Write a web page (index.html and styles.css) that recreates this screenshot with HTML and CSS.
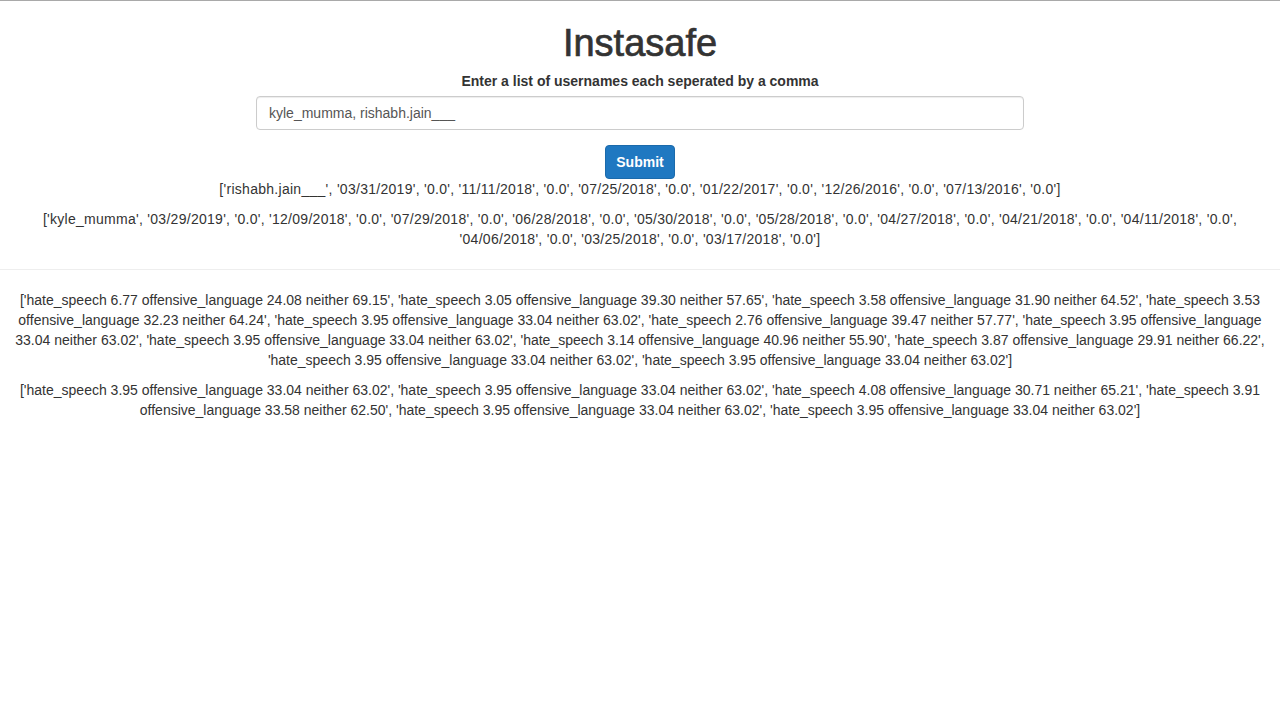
FILE: index.html
```html
<!DOCTYPE html>
<html>
<head>
<meta charset="utf-8">
<title>Instasafe</title>
<link rel="stylesheet" href="styles.css">
</head>
<body>
<div class="page">
  <h1 class="title">Instasafe</h1>
  <form class="form">
    <label class="label" for="users">Enter a list of usernames each seperated by a comma</label>
    <input class="input" id="users" type="text" value="kyle_mumma, rishabh.jain___">
    <button class="btn" type="button">Submit</button>
  </form>
  <p class="row row-dates">['rishabh.jain___', '03/31/2019', '0.0', '11/11/2018', '0.0', '07/25/2018', '0.0', '01/22/2017', '0.0', '12/26/2016', '0.0', '07/13/2016', '0.0']</p>
  <p class="row row-dates">['kyle_mumma', '03/29/2019', '0.0', '12/09/2018', '0.0', '07/29/2018', '0.0', '06/28/2018', '0.0', '05/30/2018', '0.0', '05/28/2018', '0.0', '04/27/2018', '0.0', '04/21/2018', '0.0', '04/11/2018', '0.0', '04/06/2018', '0.0', '03/25/2018', '0.0', '03/17/2018', '0.0']</p>
  <hr class="divider">
  <p class="row">['hate_speech 6.77 offensive_language 24.08 neither 69.15', 'hate_speech 3.05 offensive_language 39.30 neither 57.65', 'hate_speech 3.58 offensive_language 31.90 neither 64.52', 'hate_speech 3.53 offensive_language 32.23 neither 64.24', 'hate_speech 3.95 offensive_language 33.04 neither 63.02', 'hate_speech 2.76 offensive_language 39.47 neither 57.77', 'hate_speech 3.95 offensive_language 33.04 neither 63.02', 'hate_speech 3.95 offensive_language 33.04 neither 63.02', 'hate_speech 3.14 offensive_language 40.96 neither 55.90', 'hate_speech 3.87 offensive_language 29.91 neither 66.22', 'hate_speech 3.95 offensive_language 33.04 neither 63.02', 'hate_speech 3.95 offensive_language 33.04 neither 63.02']</p>
  <p class="row">['hate_speech 3.95 offensive_language 33.04 neither 63.02', 'hate_speech 3.95 offensive_language 33.04 neither 63.02', 'hate_speech 4.08 offensive_language 30.71 neither 65.21', 'hate_speech 3.91 offensive_language 33.58 neither 62.50', 'hate_speech 3.95 offensive_language 33.04 neither 63.02', 'hate_speech 3.95 offensive_language 33.04 neither 63.02']</p>
</div>
</body>
</html>
```
FILE: styles.css
```css
html, body {
  margin: 0;
  padding: 0;
  background: #fff;
}
body {
  border-top: 1px solid #a9a9a9;
  font-family: "Liberation Sans", Arial, Helvetica, sans-serif;
  font-size: 14px;
  line-height: 20px;
  color: #333;
}
.page {
  padding: 0 15px;
  text-align: center;
}
.title {
  font-size: 38px;
  font-weight: 500;
  line-height: 40px;
  margin: 22px 0 8px;
  color: #333;
  -webkit-text-stroke: 0.7px #333;
}
.form {
  display: flex;
  flex-direction: column;
  align-items: center;
}
.label {
  font-weight: bold;
  margin-bottom: 5px;
}
.input {
  box-sizing: border-box;
  width: 768px;
  height: 34px;
  padding: 6px 12px;
  font-family: inherit;
  font-size: 14px;
  color: #555;
  background: #fff;
  border: 1px solid #ccc;
  border-radius: 4px;
  box-shadow: inset 0 1px 1px rgba(0,0,0,.075);
  outline: none;
}
.btn {
  box-sizing: border-box;
  margin-top: 15px;
  width: 70px;
  height: 34px;
  padding: 6px 10px;
  font-family: inherit;
  font-size: 14px;
  font-weight: bold;
  color: #fff;
  background: #1f78c1;
  border: 1px solid #1b6aab;
  border-radius: 4px;
}
.row {
  margin: 0 0 10px;
}
.row-dates {
  letter-spacing: 0.28px;
}
.divider {
  border: 0;
  border-top: 1px solid #eee;
  margin: 20px -15px;
}
```
